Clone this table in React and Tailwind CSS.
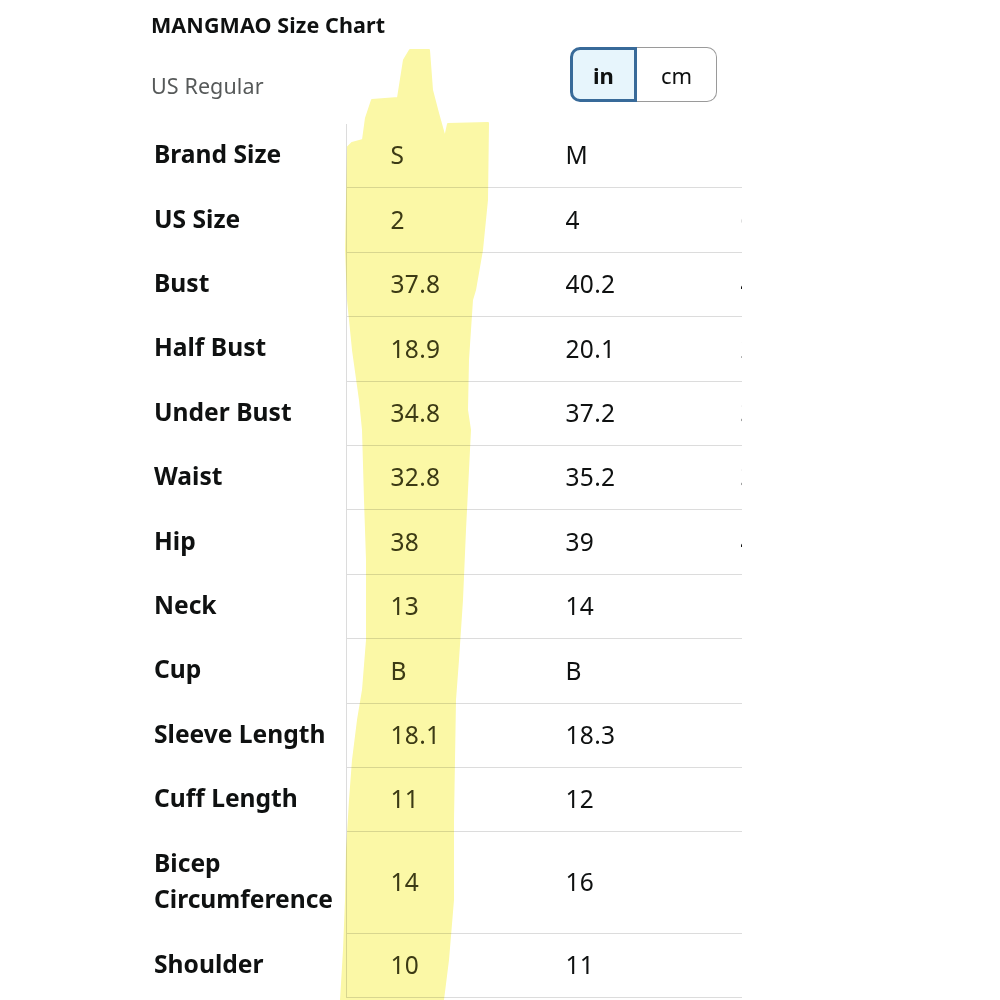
const cols = ["S", "M", "L"];

const rows = [
  { label: "Brand Size", values: ["S", "M", "L"] },
  { label: "US Size", values: ["2", "4", "6"] },
  { label: "Bust", values: ["37.8", "40.2", "42.5"] },
  { label: "Half Bust", values: ["18.9", "20.1", "21.3"] },
  { label: "Under Bust", values: ["34.8", "37.2", "39.6"] },
  { label: "Waist", values: ["32.8", "35.2", "37.6"] },
  { label: "Hip", values: ["38", "39", "41"] },
  { label: "Neck", values: ["13", "14", "15"] },
  { label: "Cup", values: ["B", "B", "C"] },
  { label: "Sleeve Length", values: ["18.1", "18.3", "18.5"] },
  { label: "Cuff Length", values: ["11", "12", "13"] },
  { label: ["Bicep", "Circumference"], values: ["14", "16", "18"], tall: true },
  { label: "Shoulder", values: ["10", "11", "12"] },
];

// hand-drawn highlighter stroke over the S column
const stroke =
  "404,60 410,50 429,50 432,90 438,113 445,138 448,124 488,123 487,200 482,250 475,290 472,300 468,360 467,410 470,430 468,470 465,530 462,600 458,660 455,700 454,760 453,820 453,900 448,960 443,1000 341,1000 344,950 346,900 347,850 350,800 353,760 358,720 363,690 367,640 367,560 365,500 363,430 360,400 353,350 348,300 346,250 347,200 348,147 352,143 363,140 366,118 372,100 398,98";

export default function App() {
  return (
    <div className="relative min-h-[1000px] w-[1000px] bg-white text-[#0f1111] font-['Noto_Sans',sans-serif]">
      <div className="pl-[151px] pt-[9px]">
        <h1 className="text-[21.5px] font-bold leading-[32px] tracking-[0.1px]">MANGMAO Size Chart</h1>

        {/* sub header + unit toggle */}
        <div className="flex items-start mt-[6px]">
          <div className="w-[419px] pt-[24px] text-[21.5px] leading-[30px] tracking-[0.1px] text-[#565959]">US Regular</div>
          <div className="flex h-[55px]">
            <button className="w-[67px] rounded-l-[10px] border-[3px] border-[#386a99] bg-[#e7f5fc] text-[22px] font-bold leading-none">
              in
            </button>
            <button className="w-[80px] rounded-r-[10px] border border-l-0 border-[#9a9a9a] bg-white text-[22px] leading-none">
              cm
            </button>
          </div>
        </div>

        {/* table */}
        <div className="mt-[22px] flex w-[591px] overflow-hidden">
          <div className="w-[195px] shrink-0 pl-[3px] -mt-[2px]">
            {rows.map((r, i) => (
              <div
                key={i}
                className={`flex items-center font-bold text-[24.6px] ${r.tall ? "h-[101.5px] leading-[36px]" : "h-[64.4px] leading-[30px]"}`}
              >
                {Array.isArray(r.label) ? (
                  <div>
                    <div>{r.label[0]}</div>
                    <div>{r.label[1]}</div>
                  </div>
                ) : (
                  r.label
                )}
              </div>
            ))}
          </div>
          <div className="border-l border-[#dcdcdc] shrink-0">
            {rows.map((r, i) => (
              <div
                key={i}
                className={`flex border-b border-[#dcdcdc] w-[600px] ${r.tall ? "h-[101.5px]" : "h-[64.4px]"}`}
              >
                {r.values.map((v, j) => (
                  <div
                    key={cols[j]}
                    className={`flex w-[175px] shrink-0 items-center pl-[43.5px] text-[24.5px] leading-none tracking-[0.3px] ${j === 0 ? "text-[#3d3c1f]" : ""}`}
                  >
                    {v}
                  </div>
                ))}
              </div>
            ))}
          </div>
        </div>
      </div>

      <svg
        className="pointer-events-none absolute left-0 top-0 mix-blend-multiply"
        width="1000"
        height="1000"
        viewBox="0 0 1000 1000"
      >
        <polygon points={stroke} fill="#fbf8a6" stroke="#fbf8a6" strokeWidth="2" strokeLinejoin="round" />
      </svg>
    </div>
  );
}
